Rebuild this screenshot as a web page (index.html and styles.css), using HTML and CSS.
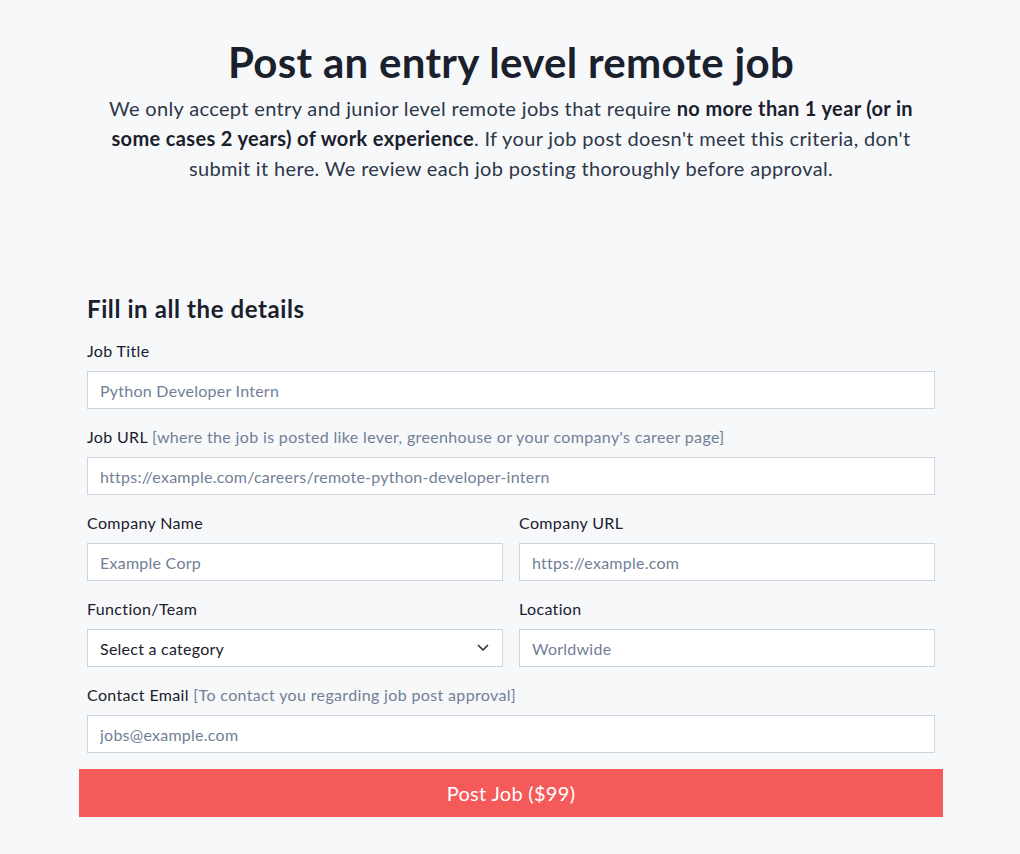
FILE: index.html
```html
<!DOCTYPE html>
<html lang="en">
<head>
<meta charset="utf-8">
<title>Post an entry level remote job</title>
<link rel="stylesheet" href="styles.css">
</head>
<body>
<main class="page">
  <header class="intro">
    <h1 class="title">Post an entry level remote job</h1>
    <p class="lead">We only accept entry and junior level remote jobs that require <strong>no more than 1 year (or in</strong> <strong>some cases 2 years) of work experience</strong>. If your job post doesn't meet this criteria, don't submit it here. We review each job posting thoroughly before approval.</p>
  </header>

  <form class="form">
    <h2 class="form-title">Fill in all the details</h2>

    <div class="field">
      <label class="label">Job Title</label>
      <input class="input" type="text" placeholder="Python Developer Intern">
    </div>

    <div class="field">
      <label class="label">Job URL <span class="hint">[where the job is posted like lever, greenhouse or your company's career page]</span></label>
      <input class="input" type="text" placeholder="https://example.com/careers/remote-python-developer-intern">
    </div>

    <div class="row">
      <div class="field">
        <label class="label">Company Name</label>
        <input class="input" type="text" placeholder="Example Corp">
      </div>
      <div class="field">
        <label class="label">Company URL</label>
        <input class="input" type="text" placeholder="https://example.com">
      </div>
    </div>

    <div class="row">
      <div class="field">
        <label class="label">Function/Team</label>
        <div class="select-wrap">
          <select class="input select">
            <option>Select a category</option>
          </select>
          <svg class="chevron" width="12" height="8" viewBox="0 0 12 8"><path d="M1.5 1.5 L6 6 L10.5 1.5" fill="none" stroke="#2d3748" stroke-width="1.7" stroke-linecap="round" stroke-linejoin="round"/></svg>
        </div>
      </div>
      <div class="field">
        <label class="label">Location</label>
        <input class="input" type="text" placeholder="Worldwide">
      </div>
    </div>

    <div class="field">
      <label class="label">Contact Email <span class="hint">[To contact you regarding job post approval]</span></label>
      <input class="input" type="email" placeholder="jobs@example.com">
    </div>

    <button class="submit" type="button">Post Job ($99)</button>
  </form>
</main>
</body>
</html>
```

FILE: styles.css
```css
* { box-sizing: border-box; }

html, body {
  margin: 0;
  padding: 0;
  background: #f7f8fa;
}

body {
  font-family: "Lato", "Noto Sans", sans-serif;
  color: #1a202c;
}

.page {
  width: 866px;
  margin: 0 auto;
  padding: 36px 0 0 2px;
}

.intro {
  text-align: center;
  padding: 0 8px;
}

.title {
  margin: 0;
  font-size: 42px;
  line-height: 52px;
  font-weight: 700;
  letter-spacing: 0.3px;
  color: #1a202c;
}

.lead {
  margin: 5px 0 0;
  padding: 0 16px;
  font-size: 20px;
  line-height: 30px;
  letter-spacing: 0.35px;
  color: #2d3748;
}

.lead strong {
  font-weight: 700;
  color: #1a202c;
}

.form {
  margin-top: 110px;
  padding-bottom: 36px;
}

.form-title {
  margin: 0 8px 14px;
  font-size: 24px;
  line-height: 32px;
  font-weight: 700;
  letter-spacing: 0.6px;
  color: #1a202c;
}

.field {
  padding: 0 8px 16px;
  display: flex;
  flex-direction: column;
  min-width: 0;
}

.row {
  display: grid;
  grid-template-columns: 1fr 1fr;
}

.label {
  display: block;
  font-size: 16px;
  line-height: 24px;
  letter-spacing: 0.35px;
  margin-bottom: 8px;
  color: #1a202c;
  white-space: nowrap;
}

.hint {
  color: #718096;
}

.input {
  display: block;
  width: 100%;
  height: 38px;
  padding: 0 12px;
  border: 1px solid #cbd5e0;
  border-radius: 0;
  background: #fff;
  font-family: inherit;
  font-size: 16px;
  letter-spacing: 0.25px;
  color: #2d3748;
  outline: none;
}

.input::placeholder {
  color: #718096;
  opacity: 1;
}

.select-wrap {
  position: relative;
}

.select {
  appearance: none;
  -webkit-appearance: none;
  color: #1a202c;
}

.chevron {
  position: absolute;
  right: 14px;
  top: 15px;
  pointer-events: none;
}

.submit {
  display: block;
  width: 100%;
  height: 48px;
  border: 0;
  background: #f55a5a;
  color: #fff;
  font-family: inherit;
  font-size: 20px;
  letter-spacing: 0.3px;
  cursor: pointer;
}
```
